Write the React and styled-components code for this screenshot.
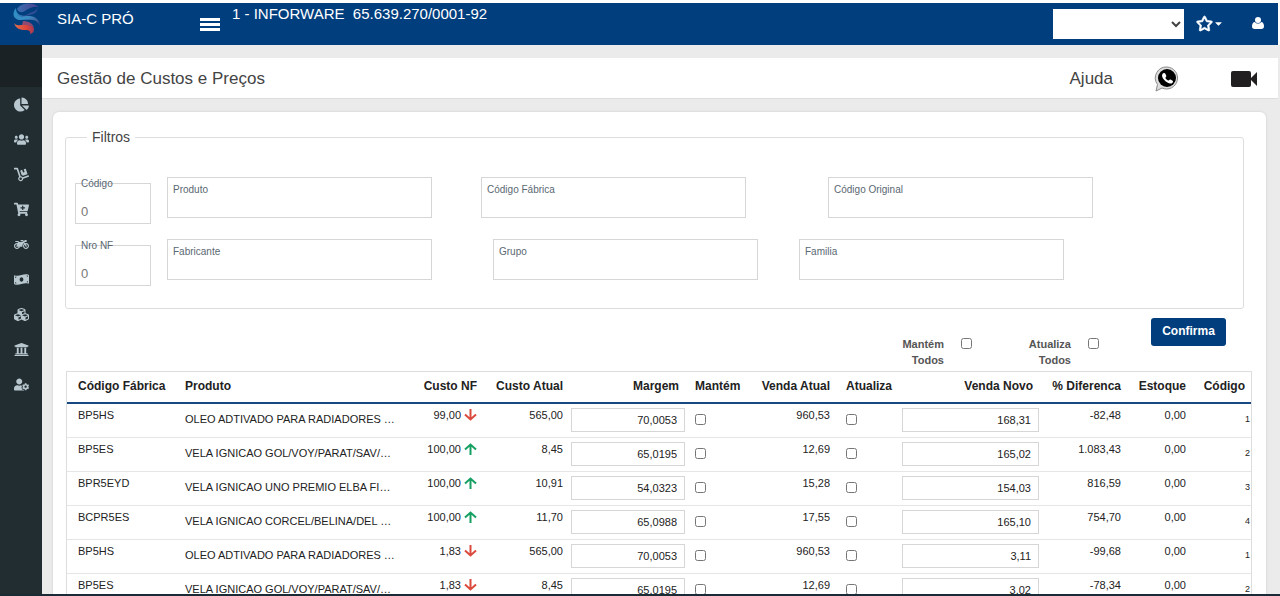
import styled, { createGlobalStyle } from 'styled-components';
import { useState } from 'react';
import {
  FaChartPie, FaUsers, FaDolly, FaCartPlus, FaMotorcycle, FaMoneyBillWave,
  FaCubes, FaUniversity, FaUserCog, FaRegStar, FaCaretDown,
} from 'react-icons/fa';

const menu = [
  { label: 'Dashboard', Icon: FaChartPie },
  { label: 'Clientes', Icon: FaUsers },
  { label: 'Compras', Icon: FaDolly },
  { label: 'Vendas', Icon: FaCartPlus },
  { label: 'Motos', Icon: FaMotorcycle },
  { label: 'Financeiro', Icon: FaMoneyBillWave },
  { label: 'Estoque', Icon: FaCubes },
  { label: 'Bancos', Icon: FaUniversity },
  { label: 'Usuários', Icon: FaUserCog },
];

const oleo = 'OLEO ADTIVADO PARA RADIADORES …';
const gol = 'VELA IGNICAO GOL/VOY/PARAT/SAV/…';

const produtos = [
  { fabrica: 'BP5HS', produto: oleo, custoNF: '99,00', subiu: false, custo: '565,00', margem: '70,0053', venda: '960,53', novo: '168,31', dif: '-82,48', estoque: '0,00', codigo: '1' },
  { fabrica: 'BP5ES', produto: gol, custoNF: '100,00', subiu: true, custo: '8,45', margem: '65,0195', venda: '12,69', novo: '165,02', dif: '1.083,43', estoque: '0,00', codigo: '2' },
  { fabrica: 'BPR5EYD', produto: 'VELA IGNICAO UNO PREMIO ELBA FI…', custoNF: '100,00', subiu: true, custo: '10,91', margem: '54,0323', venda: '15,28', novo: '154,03', dif: '816,59', estoque: '0,00', codigo: '3' },
  { fabrica: 'BCPR5ES', produto: 'VELA IGNICAO CORCEL/BELINA/DEL …', custoNF: '100,00', subiu: true, custo: '11,70', margem: '65,0988', venda: '17,55', novo: '165,10', dif: '754,70', estoque: '0,00', codigo: '4' },
  { fabrica: 'BP5HS', produto: oleo, custoNF: '1,83', subiu: false, custo: '565,00', margem: '70,0053', venda: '960,53', novo: '3,11', dif: '-99,68', estoque: '0,00', codigo: '1' },
  { fabrica: 'BP5ES', produto: gol, custoNF: '1,83', subiu: false, custo: '8,45', margem: '65,0195', venda: '12,69', novo: '3,02', dif: '-78,34', estoque: '0,00', codigo: '2' },
];

function Logo() {
  return (
    <svg width="30" height="32" viewBox="0 0 30 32" aria-hidden="true">
      <defs>
        <linearGradient id="roxo" x1="0" y1="0" x2="1" y2="0">
          <stop offset="0" stopColor="#3a6db0" />
          <stop offset="1" stopColor="#4b3f8a" />
        </linearGradient>
        <linearGradient id="azul" x1="0" y1="0" x2="1" y2="1">
          <stop offset="0" stopColor="#2b8fc8" />
          <stop offset="0.55" stopColor="#3c8ac0" />
          <stop offset="1" stopColor="#4a3a78" />
        </linearGradient>
        <linearGradient id="fogo" x1="0" y1="0" x2="1" y2="0">
          <stop offset="0" stopColor="#d9704e" />
          <stop offset="0.6" stopColor="#e2463a" />
          <stop offset="1" stopColor="#a03a58" />
        </linearGradient>
      </defs>
      <path d="M5 6C8 0 20-2 27 4c-5-1-10 1-14 4-3 2-6 2-8-2z" fill="url(#roxo)" />
      <path d="M4 5c-5 6-2 12 5 12 8 0 16-2 19 6-1-9-7-10-13-10C9 13 4 12 4 5z" fill="url(#azul)" />
      <path d="M5 11c4 4 9 1 13-1 3-1 6-2 8-6-1 6-4 7-8 8-5 1-10 3-13-1z" fill="#344f96" />
      <path d="M2 20c2 3 5 2 9 2 6-1 11 1 11 4s-1 4-4 5c1-3-1-4-5-4-5 0-9-1-11-7z" fill="url(#fogo)" />
      <path d="M11 18c5 0 9 2 11 6-4-2-8-2-12-2z" fill="#8f4a72" />
    </svg>
  );
}

function WhatsApp() {
  return (
    <svg width="25" height="26" viewBox="0 0 25 26" aria-hidden="true">
      <path d="M13 1a11 11 0 1 1-5 21l-6 3 1.500-6.500A11 11 0 0 1 13 1z" fill="#ddd" stroke="#8a8a8a" strokeWidth="1" />
      <circle cx="13" cy="12" r="9" fill="#000" />
      <path d="M9.300 7.300c-2 1.200-1.500 4 1 6.700s5.500 4.300 7.700 3.200c1.200-.8 1.300-2 .6-2.500l-2-1.200c-.8-.3-1.200.2-1.700.8-.5.400-1.200.2-2.300-.9s-1.400-1.600-.9-2.200c.5-.6.800-.9.500-1.700l-1-2c-.5-.7-1.200-.8-1.900-.2z" fill="#fff" />
    </svg>
  );
}

function Camera() {
  return (
    <svg width="26" height="16" viewBox="0 0 26 16" aria-hidden="true">
      <rect x="0" y="0" width="20" height="16" rx="2" fill="#221f20" />
      <path d="M20 7l6-6v14l-6-6z" fill="#221f20" />
    </svg>
  );
}

function Pessoa() {
  return (
    <svg width="12" height="12" viewBox="0 0 12 12" fill="#fff" aria-hidden="true">
      <circle cx="6" cy="3" r="3" />
      <path d="M3 5c-2 0-3 2-3 4.500C0 11 1 12 2.500 12h7c1.500 0 2.500-1 2.500-2.500C12 7 11 5 9 5 8 7 4 7 3 5z" />
    </svg>
  );
}

function Seta({ subiu }) {
  return (
    <IconeSeta width="13" height="12" viewBox="0 0 13 12" fill="none" stroke={subiu ? '#16a163' : '#db4a3c'} strokeWidth="2" aria-hidden="true">
      <path d={subiu ? 'M6.500 12V1M1 6.500l5.500-5 5.500 5' : 'M6.500 0v11M1 5.500l5.500 5 5.500-5'} />
    </IconeSeta>
  );
}

function Campo({ id, label, pequeno, ...rest }) {
  return (
    <CampoArea $pequeno={pequeno}>
      <CampoLabel htmlFor={id} $pequeno={pequeno}>{label}</CampoLabel>
      <CampoInput id={id} type="text" {...rest} />
    </CampoArea>
  );
}

function App() {

  const [mantem, setMantem] = useState(false);
  const [atualiza, setAtualiza] = useState(false);

  return (
    <Pagina>
      <GlobalStyle />
      <Topo>
        <Marca>
          <Logo />
          <span>SIA-C PRÓ</span>
        </Marca>
        <BotaoMenu type="button" aria-label="Menu">
          <i /><i /><i />
        </BotaoMenu>
        <Empresa>1 - INFORWARE&nbsp; 65.639.270/0001-92</Empresa>
        <Loja aria-label="Loja" defaultValue="">
          <option value=""></option>
        </Loja>
        <BotaoTopo type="button" aria-label="Favoritos">
          <FaRegStar size={17} stroke="#fff" strokeWidth={24} />
          <FaCaretDown size={11} />
        </BotaoTopo>
        <BotaoTopo type="button" aria-label="Usuário" $direita>
          <Pessoa />
        </BotaoTopo>
      </Topo>

      <Corpo>
        <Lateral>
          {menu.map(({ label, Icon }) => (
            <ItemMenu key={label} href="#" aria-label={label}>
              <Icon size={15} />
            </ItemMenu>
          ))}
        </Lateral>

        <Conteudo>
          <Cabecalho>
            <Titulo>Gestão de Custos e Preços</Titulo>
            <Ajuda href="#">Ajuda</Ajuda>
            <Atalho href="#" aria-label="WhatsApp"><WhatsApp /></Atalho>
            <Atalho href="#" aria-label="Vídeo"><Camera /></Atalho>
          </Cabecalho>

          <Cartao>
            <Filtros>
              <legend>Filtros</legend>
              <Linha $terceiro={49} $quarto={82}>
                <Campo id="codigo" label="Código" pequeno defaultValue="0" />
                <Campo id="produto" label="Produto" />
                <Campo id="fabrica" label="Código Fábrica" />
                <Campo id="original" label="Código Original" />
              </Linha>
              <Linha $terceiro={61} $quarto={41}>
                <Campo id="nota" label="Nro NF" pequeno defaultValue="0" />
                <Campo id="fabricante" label="Fabricante" />
                <Campo id="grupo" label="Grupo" />
                <Campo id="familia" label="Familia" />
              </Linha>
            </Filtros>

            <Acoes>
              <Todos>
                <span>Mantém Todos</span>
                <Check type="checkbox" checked={mantem} onChange={(e) => setMantem(e.target.checked)} />
              </Todos>
              <Todos>
                <span>Atualiza Todos</span>
                <Check type="checkbox" checked={atualiza} onChange={(e) => setAtualiza(e.target.checked)} />
              </Todos>
              <Confirma type="button">Confirma</Confirma>
            </Acoes>

            <Tabela>
              <thead>
                <tr>
                  <Th $w={110}>Código Fábrica</Th>
                  <Th>Produto</Th>
                  <Th $w={76} $num>Custo NF</Th>
                  <Th $w={86} $num>Custo Atual</Th>
                  <Th $w={116} $num>Margem</Th>
                  <Th $w={64}>Mantém</Th>
                  <Th $w={87} $num>Venda Atual</Th>
                  <Th $w={64}>Atualiza</Th>
                  <Th $w={139} $num>Venda Novo</Th>
                  <Th $w={88} $num>% Diferenca</Th>
                  <Th $w={65} $num>Estoque</Th>
                  <Th $w={57} $num>Código</Th>
                </tr>
              </thead>
              <tbody>
                {produtos.map((p, i) => (
                  <tr key={i}>
                    <Td>{p.fabrica}</Td>
                    <Td $meio>{p.produto}</Td>
                    <Td $num>{p.custoNF}<Seta subiu={p.subiu} /></Td>
                    <Td $num>{p.custo}</Td>
                    <TdInput><Valor type="text" aria-label="Margem" defaultValue={p.margem} /></TdInput>
                    <Td $meio><Check type="checkbox" aria-label="Mantém" /></Td>
                    <Td $num>{p.venda}</Td>
                    <Td $meio><Check type="checkbox" aria-label="Atualiza" /></Td>
                    <TdInput><Valor type="text" aria-label="Venda Novo" defaultValue={p.novo} /></TdInput>
                    <Td $num>{p.dif}</Td>
                    <Td $num>{p.estoque}</Td>
                    <TdCodigo>{p.codigo}</TdCodigo>
                  </tr>
                ))}
              </tbody>
            </Tabela>
          </Cartao>
        </Conteudo>
      </Corpo>
      <Rodape />
    </Pagina>
  );
}

export default App;

const GlobalStyle = createGlobalStyle`
  * {
    box-sizing: border-box;
  }

  body {
    margin: 0;
    background: #fff;
    color: #222;
    font-family: "Liberation Sans", Arial, sans-serif;
    font-size: 11px;
  }

  input, select, button {
    font-family: inherit;
  }
`;

const Pagina = styled.div`
  height: 100vh;
  display: flex;
  flex-direction: column;
  overflow: hidden;
  padding-top: 3px;
`;

const Topo = styled.header`
  flex: none;
  height: 42px;
  margin-right: 2px;
  display: flex;
  align-items: flex-start;
  background: #003e7e;
  color: #fff;
  font-size: 15px;
`;

const Marca = styled.div`
  width: 200px;
  padding-left: 12px;
  display: flex;
  gap: 15px;
  line-height: 32px;
`;

const BotaoMenu = styled.button`
  width: 20px;
  margin-top: 15px;
  padding: 0;
  border: 0;
  background: none;
  display: flex;
  flex-direction: column;
  gap: 2px;

  i {
    height: 3px;
    background: #fff;
  }
`;

const Empresa = styled.div`
  flex: 1;
  padding-left: 12px;
  line-height: 22px;
`;

const Loja = styled.select`
  width: 131px;
  height: 30px;
  margin-top: 6px;
  border: 0;
  background: #fff;
  color: #444;
`;

const BotaoTopo = styled.button`
  width: ${(props) => (props.$direita ? '54px' : '40px')};
  height: 40px;
  padding: 0 0 0 ${(props) => (props.$direita ? '28px' : '12px')};
  border: 0;
  background: none;
  color: #fff;
  display: flex;
  align-items: center;

  svg {
    flex: none;
    overflow: visible;
  }
`;

const Corpo = styled.div`
  flex: 1;
  min-height: 0;
  display: flex;
`;

const Lateral = styled.nav`
  flex: none;
  width: 42px;
  display: flex;
  flex-direction: column;
  background: #222d32;
  border-top: 42px solid #1a2226;
`;

const ItemMenu = styled.a`
  height: 35px;
  display: flex;
  align-items: center;
  justify-content: center;
  color: #b8c7ce;
`;

const Conteudo = styled.main`
  flex: 1;
  min-width: 0;
  padding-top: 13px;
  background: #ebebeb;
`;

const Cabecalho = styled.div`
  height: 41px;
  margin-right: 2px;
  padding: 1px 21px 0 15px;
  display: flex;
  align-items: center;
  background: #fff;
  border-bottom: 1px solid #ddd;
  color: #444;
  font-size: 17px;
`;

const Titulo = styled.h1`
  flex: 1;
  margin: 0;
  font-size: 17px;
  font-weight: normal;
`;

const Ajuda = styled.a`
  color: #444;
  text-decoration: none;
`;

const Atalho = styled.a`
  display: flex;
  margin-left: 41px;

  & + & {
    margin-left: 52px;
  }
`;

const Cartao = styled.section`
  height: 600px;
  margin: 13px 14px 0 11px;
  padding: 17px 12px 0;
  background: #fff;
  border-radius: 6px;
  box-shadow: 0 0 3px rgba(0, 0, 0, 0.12);
`;

const Filtros = styled.fieldset`
  margin: 0 10px 0 0;
  padding: 32px 9px 22px;
  border: 1px solid #ddd;
  border-radius: 3px;
  display: flex;
  flex-direction: column;
  gap: 15px;

  legend {
    margin-left: 12px;
    padding: 0 5px;
    color: #444;
    font-size: 14px;
    line-height: 16px;
  }
`;

const Linha = styled.div`
  display: flex;
  align-items: flex-start;

  > :nth-child(2) {
    margin-left: 16px;
  }

  > :nth-child(3) {
    margin-left: ${(props) => props.$terceiro}px;
  }

  > :nth-child(4) {
    margin-left: ${(props) => props.$quarto}px;
  }
`;

const CampoArea = styled.div`
  position: relative;
  width: ${(props) => (props.$pequeno ? '76px' : '265px')};
  padding-top: ${(props) => (props.$pequeno ? '6px' : '0')};
`;

const CampoLabel = styled.label`
  position: absolute;
  left: 6px;
  top: ${(props) => (props.$pequeno ? '0' : '6px')};
  color: #5a6872;
  font-size: 10px;
  line-height: 13px;
`;

const CampoInput = styled.input`
  display: block;
  width: 100%;
  height: 41px;
  padding: 16px 5px 0;
  border: 1px solid #d6d6d6;
  background: #fff;
  color: #777;
  font-size: 13px;
`;

const Acoes = styled.div`
  height: 62px;
  padding: 9px 28px 0 0;
  display: flex;
  justify-content: flex-end;
  align-items: flex-start;
`;

const Todos = styled.label`
  width: 127px;
  padding-top: 18px;
  display: flex;
  gap: 17px;
  color: #555;
  font-weight: bold;
  line-height: 16px;

  span {
    width: 47px;
    text-align: right;
  }
`;

const Confirma = styled.button`
  width: 75px;
  height: 28px;
  padding: 0 0 3px;
  border: 0;
  border-radius: 3px;
  background: #003e7e;
  color: #fff;
  font-size: 12px;
  font-weight: bold;
`;

const Check = styled.input`
  display: block;
  width: 11px;
  height: 11px;
  margin: 2px 0 0;
`;

const Tabela = styled.table`
  width: calc(100% - 3px);
  margin-left: 1px;
  table-layout: fixed;
  border: 1px solid #ddd;
  border-spacing: 0;
`;

const Th = styled.th`
  width: ${(props) => (props.$w ? props.$w + 'px' : 'auto')};
  height: 32px;
  padding: 0 8px 2px;
  border-bottom: 2px solid #17487f;
  color: #222;
  font-size: 12px;
  text-align: ${(props) => (props.$num ? 'right' : 'left')};
  white-space: nowrap;

  &:first-child {
    padding-left: 11px;
  }

  &:last-child {
    padding-right: 6px;
  }
`;

const Td = styled.td`
  height: 34px;
  padding: ${(props) => (props.$meio ? '8px' : '4px')} 8px 0;
  border-bottom: 1px solid #e6e6e6;
  line-height: 14px;
  vertical-align: top;
  text-align: ${(props) => (props.$num ? 'right' : 'left')};
  white-space: nowrap;

  &:first-child {
    padding-left: 11px;
  }
`;

const TdInput = styled(Td)`
  padding: 4px 2px 0 0;
`;

const TdCodigo = styled(Td)`
  padding: 8px 1px 0 0;
  font-size: 9px;
  text-align: right;
`;

const IconeSeta = styled.svg`
  margin-left: 3px;
  vertical-align: -2px;
`;

const Valor = styled.input`
  display: block;
  width: 100%;
  height: 24px;
  padding: 0 7px;
  border: 1px solid #d6d6d6;
  background: #fff;
  color: #222;
  font-size: 11px;
  text-align: right;
`;

const Rodape = styled.footer`
  flex: none;
  height: 2px;
  background: #1b2b36;
`;
